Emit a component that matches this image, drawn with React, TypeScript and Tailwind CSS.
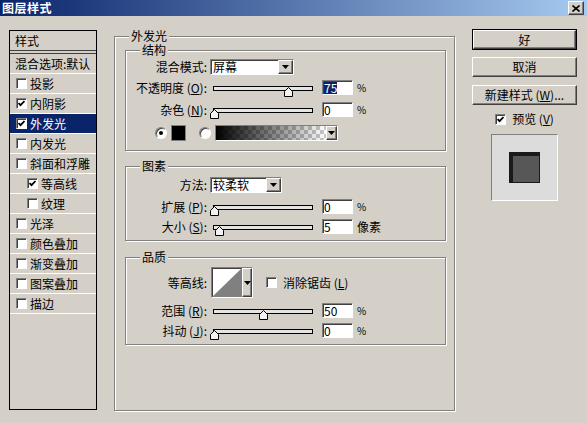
import React from 'react'

const sunken =
  'border border-t-[#808080] border-l-[#808080] border-r-white border-b-white shadow-[inset_1px_1px_0_#404040]'
const raised =
  'border border-t-white border-l-white border-r-[#404040] border-b-[#404040] shadow-[inset_-1px_-1px_0_#808080]'

const Arrow = () => (
  <svg width="7" height="4" viewBox="0 0 7 4">
    <path d="M0 0h7L3.5 4z" fill="#000" />
  </svg>
)

const Check = () => (
  <svg width="7" height="7" viewBox="0 0 7 7">
    <polyline points="0.5,3 2.5,5.2 6.5,1" fill="none" stroke="#000" strokeWidth="1.8" />
  </svg>
)

function Checkbox({ checked }: { checked?: boolean }) {
  return (
    <span className={`flex h-[11px] w-[11px] shrink-0 items-center justify-center bg-white ${sunken}`}>
      {checked && <Check />}
    </span>
  )
}

function Radio({ on }: { on?: boolean }) {
  return (
    <span className="flex h-[12px] w-[12px] shrink-0 items-center justify-center rounded-full border border-t-[#808080] border-l-[#808080] border-r-white border-b-white bg-white shadow-[inset_1px_1px_0_#404040]">
      {on && <span className="h-[4px] w-[4px] rounded-full bg-black" />}
    </span>
  )
}

function Slider({ value, max = 100 }: { value: number; max?: number }) {
  const left = Math.round(-3 + (value / max) * 98)
  return (
    <div className="relative ml-[3px] h-[15px] w-[100px] shrink-0">
      <div className="absolute left-0 right-0 top-[6px] h-[5px] border border-black bg-[#e4e4e4]" />
      <svg className="absolute top-[7px]" style={{ left }} width="9" height="10" viewBox="0 0 9 10">
        <path d="M0.5 9.5V4.5L4.5 0.5L8.5 4.5V9.5Z" fill="#f2f2f2" stroke="#000" />
      </svg>
    </div>
  )
}

function Field({ value, selected }: { value: string; selected?: boolean }) {
  return (
    <div className={`ml-[9px] flex h-[15px] w-[31px] shrink-0 items-center bg-white pl-[1px] leading-[12px] ${sunken}`}>
      {selected ? <span className="bg-[#0a246a] text-white">{value}</span> : value}
    </div>
  )
}

function Select({ value, w }: { value: string; w: string }) {
  return (
    <div className={`flex h-[16px] ${w} shrink-0 bg-white ${sunken}`}>
      <span className="flex-1 pl-[2px] leading-[13px]">{value}</span>
      <span className={`flex w-[15px] items-center justify-center bg-[#d4d0c8] ${raised}`}>
        <Arrow />
      </span>
    </div>
  )
}

function Label({ children }: { children: React.ReactNode }) {
  return <span className="w-[84px] shrink-0 whitespace-nowrap pr-[3px] text-right leading-[14px]">{children}</span>
}

function Group({ title, className, children }: { title: string; className: string; children?: React.ReactNode }) {
  return (
    <div className={`relative border border-[#808080] shadow-[inset_1px_1px_0_#fff,1px_1px_0_#fff] ${className}`}>
      <span className="absolute -top-[7px] left-[14px] bg-[#d4d0c8] px-[2px] leading-[12px]">{title}</span>
      {children}
    </div>
  )
}

const Pct = () => <span className="ml-[4px] text-[10px] leading-none">%</span>

const styles = [
  { label: '投影' },
  { label: '内阴影', checked: true },
  { label: '外发光', checked: true, selected: true },
  { label: '内发光' },
  { label: '斜面和浮雕' },
  { label: '等高线', checked: true, indent: true },
  { label: '纹理', indent: true },
  { label: '光泽' },
  { label: '颜色叠加' },
  { label: '渐变叠加' },
  { label: '图案叠加' },
  { label: '描边' },
]

export default function App() {
  return (
    <div className="h-[423px] w-[587px] overflow-hidden bg-[#d4d0c8] font-['Noto_Sans_CJK_SC','Noto_Sans',sans-serif] text-[12px] leading-[14px] text-black">
      {/* title bar */}
      <div className="flex h-[16px] items-center justify-between bg-[linear-gradient(to_right,#0a246a,#a6caf0)] pl-[2px] pr-[3px]">
        <span className="text-[12px] font-bold leading-[12px] tracking-[0.5px] text-white">图层样式</span>
        <span className={`flex h-[14px] w-[16px] items-center justify-center bg-[#d4d0c8] ${raised}`}>
          <svg width="8" height="7" viewBox="0 0 8 7">
            <path d="M0.5 0.5L7.5 6.5M7.5 0.5L0.5 6.5" stroke="#000" strokeWidth="1.6" />
          </svg>
        </span>
      </div>

      <div className="flex items-start pl-[9px] pt-[14px]">
        {/* style list */}
        <div className="flex h-[380px] w-[88px] shrink-0 flex-col border border-black">
          <div className="flex h-[23px] items-center border-b-[4px] border-double border-[#404040] pl-[5px]">样式</div>
          <div className="flex h-[20px] items-center whitespace-nowrap border-b border-white pl-[5px]">混合选项:默认</div>
          {styles.map((s) => (
            <div
              key={s.label}
              className={`flex h-[20px] items-center border-b border-white ${s.indent ? 'pl-[17px]' : 'pl-[6px]'} ${
                s.selected ? 'bg-[#0a246a] text-white' : ''
              }`}
            >
              <Checkbox checked={s.checked} />
              <span className="ml-[3px] whitespace-nowrap">{s.label}</span>
            </div>
          ))}
        </div>

        {/* outer glow */}
        <Group title="外发光" className="ml-[17px] mt-[6px] h-[375px] w-[341px] shrink-0 pl-[10px] pt-[13px]">
          <Group title="结构" className="h-[101px] w-[321px] pt-[8px]">
            <div className="flex h-[16px] items-center">
              <Label>混合模式:</Label>
              <Select value="屏幕" w="w-[84px]" />
            </div>
            <div className="mt-[5px] flex h-[15px] items-center">
              <Label>
                不透明度 (<u>O</u>):
              </Label>
              <Slider value={75} />
              <Field value="75" selected />
              <Pct />
            </div>
            <div className="mt-[7px] flex h-[15px] items-center">
              <Label>
                杂色 (<u>N</u>):
              </Label>
              <Slider value={0} />
              <Field value="0" />
              <Pct />
            </div>
            <div className="mt-[8px] flex h-[16px] items-center pl-[29px]">
              <Radio on />
              <span className="ml-[4px] h-[16px] w-[15px] border border-[#808080] bg-black" />
              <span className="ml-[13px]">
                <Radio />
              </span>
              <div className={`ml-[4px] flex h-[16px] w-[123px] ${sunken}`}>
                <div className="flex-1 [background-image:linear-gradient(to_right,#000,rgba(0,0,0,0)),repeating-conic-gradient(#c8c8c8_0_25%,#ffffff_0_50%)] [background-size:100%_100%,8px_8px]" />
                <span className={`flex w-[11px] items-center justify-center bg-[#d4d0c8] ${raised}`}>
                  <Arrow />
                </span>
              </div>
            </div>
          </Group>

          <Group title="图素" className="mt-[15px] h-[75px] w-[321px] pt-[10px]">
            <div className="flex h-[16px] items-center">
              <Label>方法:</Label>
              <Select value="较柔软" w="w-[72px]" />
            </div>
            <div className="mt-[6px] flex h-[15px] items-center">
              <Label>
                扩展 (<u>P</u>):
              </Label>
              <Slider value={0} />
              <Field value="0" />
              <Pct />
            </div>
            <div className="mt-[5px] flex h-[15px] items-center">
              <Label>
                大小 (<u>S</u>):
              </Label>
              <Slider value={5} />
              <Field value="5" />
              <span className="ml-[4px]">像素</span>
            </div>
          </Group>

          <Group title="品质" className="mt-[16px] h-[88px] w-[321px] pt-[9px]">
            <div className="flex h-[31px] items-center">
              <Label>等高线:</Label>
              <div className={`ml-[1px] flex h-[31px] w-[42px] shrink-0 bg-white ${sunken}`}>
                <div className="flex-1">
                  <svg width="100%" height="100%" viewBox="0 0 29 27" preserveAspectRatio="none">
                    <path d="M0 27L29 0V27Z" fill="#808080" />
                  </svg>
                </div>
                <span className={`flex w-[10px] items-center justify-center bg-[#d4d0c8] ${raised}`}>
                  <Arrow />
                </span>
              </div>
              <span className="ml-[13px]">
                <Checkbox />
              </span>
              <span className="ml-[6px] whitespace-nowrap">
                消除锯齿 (<u>L</u>)
              </span>
            </div>
            <div className="mt-[5px] flex h-[15px] items-center">
              <Label>
                范围 (<u>R</u>):
              </Label>
              <Slider value={50} />
              <Field value="50" />
              <Pct />
            </div>
            <div className="mt-[5px] flex h-[15px] items-center">
              <Label>
                抖动 (<u>J</u>):
              </Label>
              <Slider value={0} />
              <Field value="0" />
              <Pct />
            </div>
          </Group>
        </Group>

        {/* buttons */}
        <div className="-mt-[1px] ml-[17px] flex w-[105px] shrink-0 flex-col">
          <div className="h-[21px] border border-black">
            <div className={`flex h-full items-center justify-center ${raised}`}>好</div>
          </div>
          <div className={`mt-[7px] flex h-[20px] items-center justify-center ${raised}`}>取消</div>
          <div className={`mt-[8px] flex h-[20px] items-center justify-center whitespace-nowrap ${raised}`}>
            新建样式 (<u>W</u>)...
          </div>
          <div className="mt-[8px] flex h-[12px] items-center justify-center">
            <Checkbox checked />
            <span className="ml-[6px]">
              预览 (<u>V</u>)
            </span>
          </div>
          <div className="mx-auto mt-[9px] flex h-[67px] w-[67px] items-center justify-center border border-t-[#808080] border-l-[#808080] border-r-white border-b-white bg-[#dcdcdc]">
            <div className="h-[31px] w-[31px] bg-[#1a1a1a] pb-[1px] pl-[4px] pr-[1px] pt-[4px]">
              <div className="h-full w-full bg-[#575757]" />
            </div>
          </div>
        </div>
      </div>
    </div>
  )
}
